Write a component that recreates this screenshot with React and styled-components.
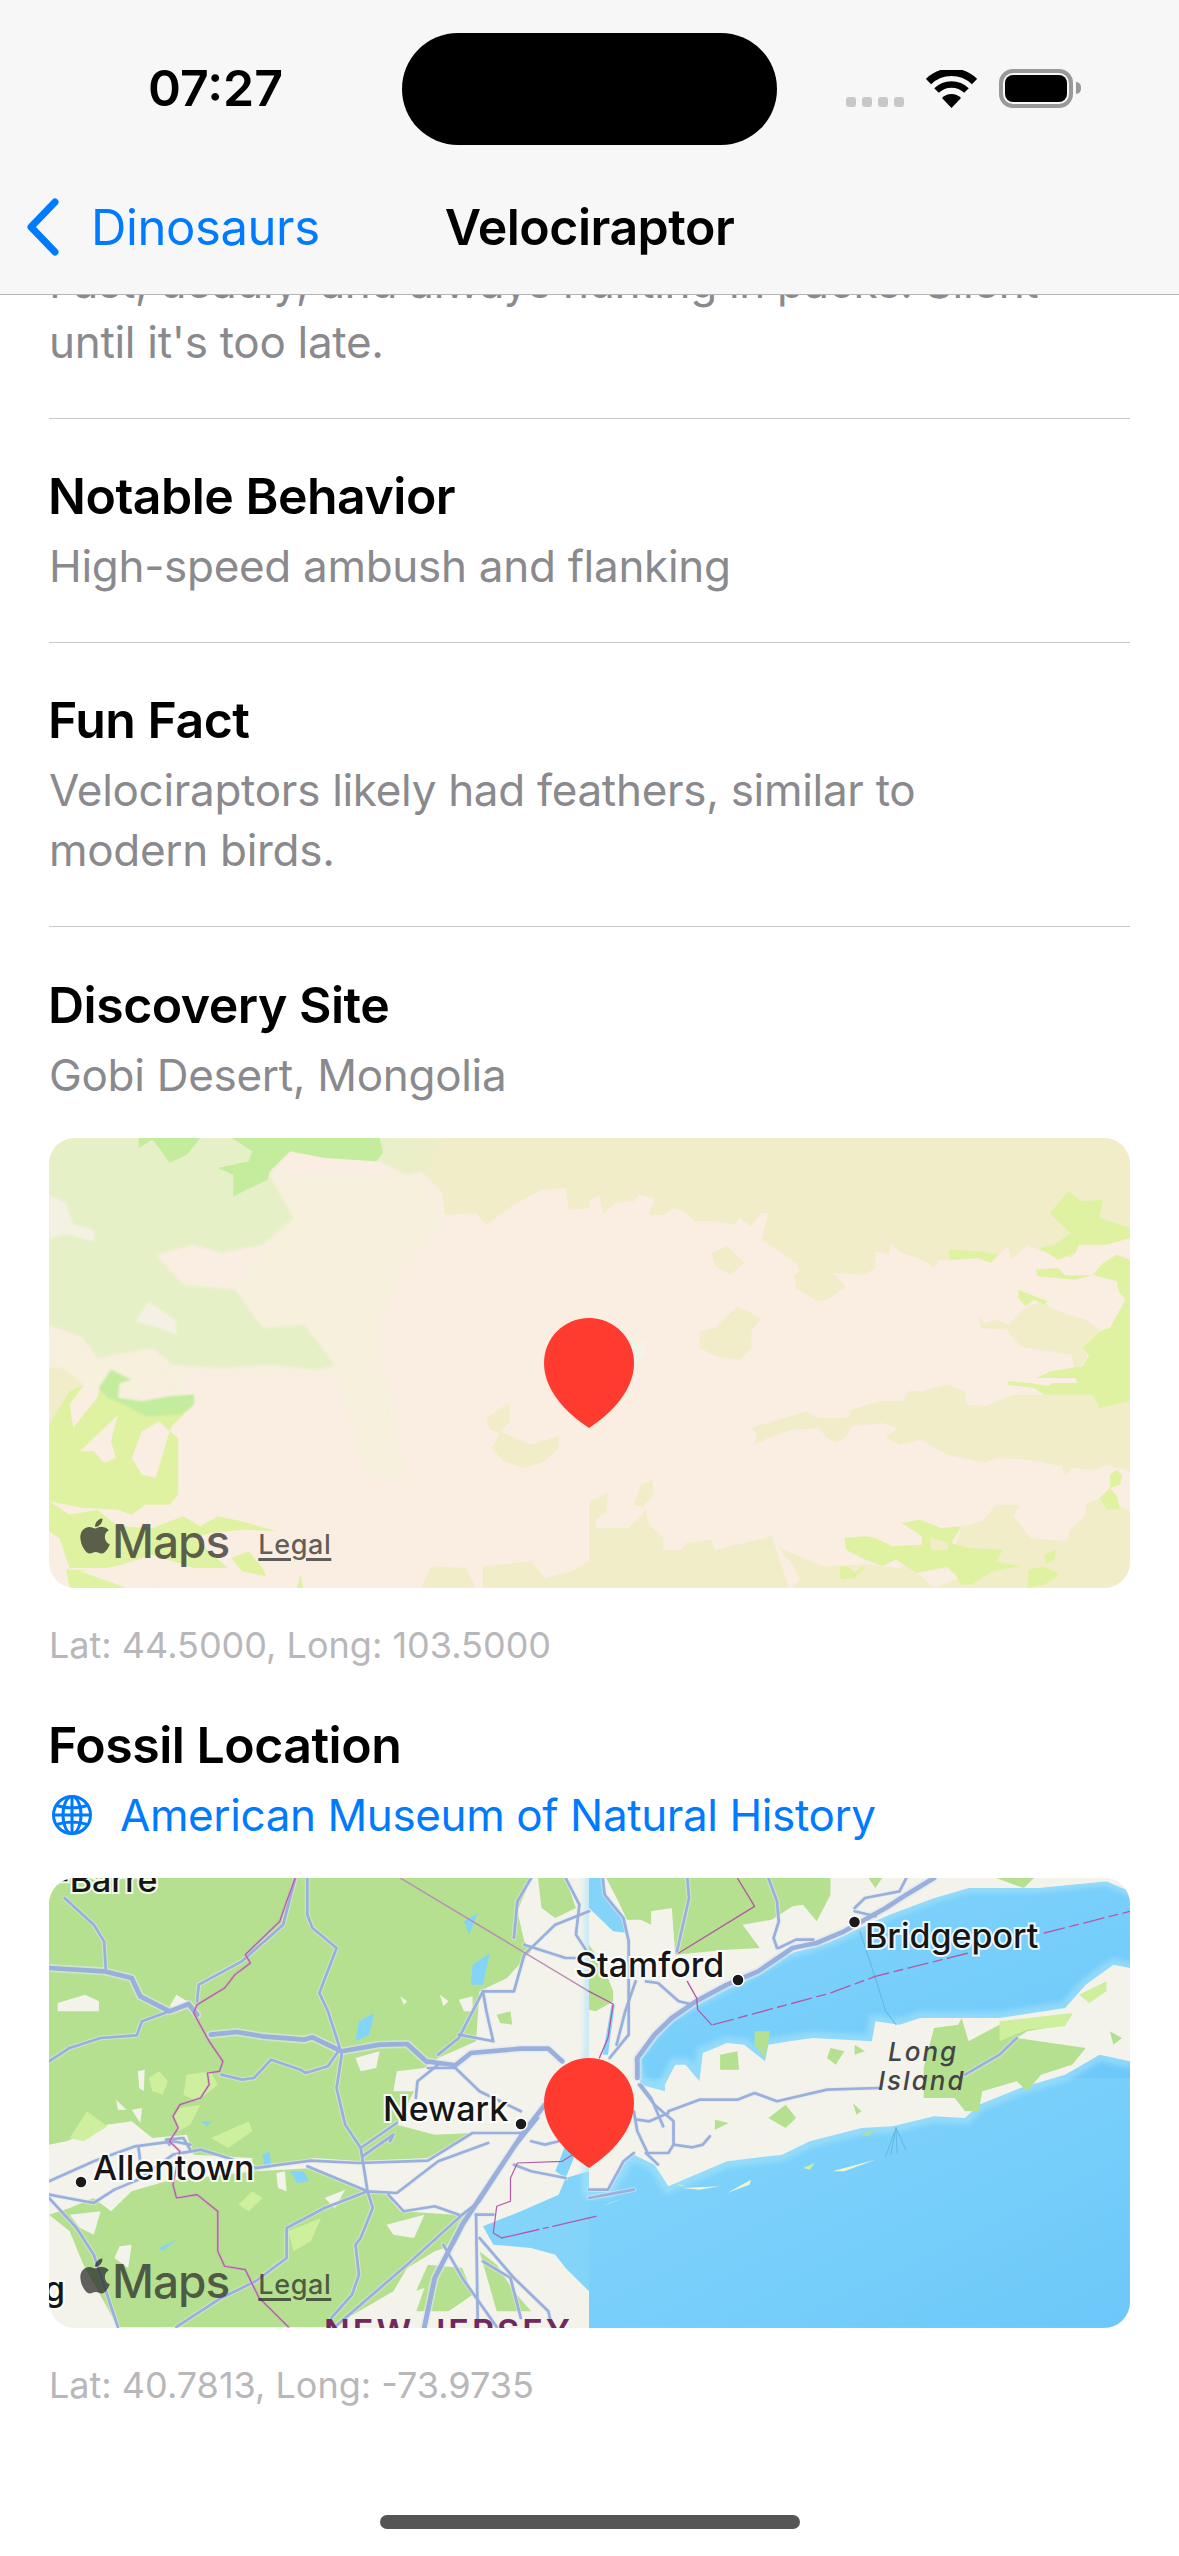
import React from 'react'
import styled, { createGlobalStyle } from 'styled-components'
import { FaApple } from 'react-icons/fa'

const GlobalStyle = createGlobalStyle`
	html, body {
		margin: 0;
		padding: 0;
		background: #fff;
	}
	body {
		font-family: Inter, "Noto Sans", sans-serif;
		-webkit-font-smoothing: antialiased;
	}
`

// map shapes are traced from 3x crops, so they sit in a stretched coordinate space
const ZOOM = 'scale(0.3444 0.3333)'
const ZOOM_RIGHT = 'translate(540 0) scale(0.3450 0.3333)'

const Shapes = ({ fill, items, ...rest }) => (
	<g fill={fill} {...rest}>
		{items.map((points, i) => <polygon key={i} points={points} />)}
	</g>
)

const Lines = ({ stroke, width, items, ...rest }) => (
	<g fill='none' stroke={stroke} strokeWidth={width} strokeLinejoin='round' strokeLinecap='round' {...rest}>
		{items.map((d, i) => <path key={i} d={d} />)}
	</g>
)

function GobiMap() {
	const tan = '#f1edc9'
	const yellow = '#dff2a2'
	const green = '#c3ec9d'
	return (
		<MapSvg viewBox='0 0 1081 450'>
			<defs>
				<linearGradient id='paleFade' x1='0' x2='1' y1='0' y2='0'>
					<stop offset='0' stopColor='#e6f0c6' />
					<stop offset='0.72' stopColor='#e6f0c6' />
					<stop offset='1' stopColor='#f1edc9' />
				</linearGradient>
				<filter id='soft' x='-10%' y='-10%' width='120%' height='120%'>
					<feGaussianBlur stdDeviation='2.5' />
				</filter>
				<filter id='softer' x='-20%' y='-20%' width='140%' height='140%'>
					<feGaussianBlur stdDeviation='14' />
				</filter>
			</defs>
			<rect width='1081' height='450' fill='#f9eee1' />
			<g transform={ZOOM}>
				<Shapes fill='#f6f0dd' filter='url(#softer)' items={[
					'640,110 1080,110 1140,240 1000,430 950,600 1000,860 1040,1030 920,1000 840,700 400,700 350,800 340,680 390,440 540,455 700,240',
					'0,560 140,660 300,640 340,720 240,800 140,740 0,860',
				]} />
				<polygon fill='url(#paleFade)' filter='url(#soft)' points='0,0 1250,0 1250,60 1140,160 1080,100 1040,110 960,70 700,40 640,110 710,240 620,320 500,345 420,320 310,350 390,440 540,455 620,570 740,560 830,680 780,695 640,680 500,690 360,680 300,630 140,660 100,600 0,560' />
				<Shapes fill={tan} items={[
					'1150,0 1568,0 1568,210 1510,215 1500,150 1430,155 1350,200 1270,260 1240,225 1150,230 1140,160 1090,100',
					'1270,840 1335,795 1340,850 1310,880 1400,920 1480,895 1480,930 1440,970 1380,990 1320,970 1285,930 1310,885 1280,875',
					'1080,1350 1110,1285 1210,1290 1240,1350',
					'1260,1350 1260,1285 1400,1270 1440,1320 1520,1300 1568,1270 1568,1350',
				]} />
				<Shapes fill={tan} filter='url(#soft)' items={['0,690 40,690 100,740 60,790 0,860']} />
				<Shapes fill='#f4f1e4' filter='url(#soft)' items={[
					'0,170 50,195 70,260 130,275 130,310 60,290 0,300',
					'250,550 290,490 370,550 370,590 320,570',
				]} />
				<Shapes fill={yellow} items={[
					'0,860 60,760 100,740 60,800 70,870 140,780 150,740 200,780 270,800 350,780 420,770 420,800 360,860 350,880 375,900 375,1070 350,1100 280,1100 240,1130 200,1115 100,1110 0,1090',
					'0,1090 60,1130 140,1115 200,1165 300,1170 390,1135 440,1165 490,1135 560,1150 660,1180 560,1175 470,1185 420,1200 520,1290 420,1290 300,1250 180,1290 60,1290 30,1200 0,1180',
					'530,1260 580,1240 620,1290 630,1315 560,1300',
					'50,1295 200,1300 222,1350 60,1350',
					'720,1350 730,1310 738,1350',
				]} />
				<Shapes fill='#f9eee1' items={[
					'90,940 200,830 180,910 195,960 160,975 130,940',
					'240,960 270,880 320,850 350,880 310,1020 270,1010',
					'90,1300 200,1285 290,1300 300,1350 225,1350',
				]} />
				<Shapes fill={green} filter='url(#soft)' items={[
					'145,750 180,695 240,725 205,735 200,780 270,790 350,775 420,770 420,800 380,830 280,835 220,800 170,780',
				]} />
				<Shapes fill={green} items={[
					'260,30 300,5 320,30 350,75 400,50 440,0 260,0',
					'530,0 960,0 970,45 950,70 800,60 700,40 640,100 635,125 535,175 535,110 490,90 580,70 590,40',
				]} />
			</g>
			<g transform={ZOOM_RIGHT}>
				<Shapes fill={tan} items={[
					'0,0 1568,0 1568,300 1500,320 1420,320 1400,360 1310,340 1270,320 1225,365 1215,325 1165,375 1130,360 1045,365 1015,365 1000,390 965,365 905,345 875,315 870,350 830,340 830,390 800,410 705,405 745,445 690,485 660,490 600,450 595,410 610,400 600,375 500,305 520,225 500,225 470,265 435,240 425,260 370,250 305,250 275,220 245,210 220,230 175,230 190,180 145,170 130,190 75,195 40,230 30,170 0,190',
					'355,345 400,325 450,375 410,410 365,385',
					'320,580 365,570 430,505 500,540 470,580 470,630 435,665 370,655 320,630',
					'1130,530 1135,570 1210,575 1250,625 1400,650 1405,690 1430,680 1450,640 1430,630 1480,575 1440,545 1360,520 1310,490 1265,510 1215,560 1185,545 1145,555',
					'470,870 630,820 660,840 750,840 760,815 840,790 910,790 925,760 960,760 1040,740 1090,760 1095,800 1150,805 1230,770 1300,770 1460,770 1480,810 1568,790 1568,1000 1500,980 1470,995 1400,990 1380,1015 1370,985 1280,965 1180,960 1150,975 1040,950 960,905 900,920 860,900 895,870 850,855 760,865 750,890 720,915 690,900 665,870 590,875 520,900 480,920 485,885',
					'0,1350 0,1090 55,1065 50,1120 20,1145 20,1170 115,1170 155,1130 165,1110 130,1100 150,1040 185,1025 185,1075 160,1100 175,1160 215,1200 215,1235 270,1235 280,1215 355,1205 365,1235 530,1195 580,1350',
					'550,1230 590,1280 610,1325 590,1350 1568,1350 1568,1120 1480,1080 1440,1100 1440,1130 1395,1175 1385,1210 1280,1200 1230,1135 1250,1100 1180,1100 1140,1150 1080,1165 1060,1230 900,1290 800,1280 680,1285',
				]} />
				<Shapes fill={yellow} items={[
					'1335,225 1390,160 1425,190 1490,185 1480,240 1568,270 1568,300 1500,320 1420,320 1410,345 1360,365 1305,330 1350,320 1395,285',
					'1045,335 1130,340 1185,350 1165,375 1130,360 1045,365',
					'1295,395 1360,390 1380,412 1460,412 1410,425 1300,415',
					'1568,365 1530,350 1490,375 1460,410 1530,430 1535,460 1555,485 1510,570 1480,580 1430,630 1450,650 1430,685 1340,700 1295,720 1410,720 1415,735 1345,735 1330,745 1280,735 1215,730 1215,740 1290,750 1320,770 1460,770 1480,810 1568,790',
					'1245,455 1330,490 1320,500 1290,485 1265,505 1245,480',
					'905,1155 960,1145 1020,1170 1080,1165 1050,1215 1100,1230 1200,1235 1180,1270 1250,1285 1170,1300 1110,1340 1080,1340 1040,1285 950,1305 890,1265 850,1285 790,1260 745,1235 740,1200 800,1195 830,1200 880,1225 965,1220 965,1195',
					'725,1285 750,1285 770,1305 790,1285 800,1290 770,1320 730,1325',
					'1275,1295 1320,1285 1365,1310 1320,1340 1270,1350',
					'1320,1250 1355,1235 1350,1265 1325,1280',
					'1480,1080 1510,1050 1510,1010 1530,995 1545,1010 1540,1040 1510,1050 1530,1075 1540,1115 1500,1115',
				]} />
				<Shapes fill={tan} items={['990,1200 1040,1215 1040,1235 990,1235']} />
				<Shapes fill='#f9eee1' items={['950,1305 1040,1290 1070,1320 1000,1350']} />
				<Shapes fill='#f3f3ea' items={['115,618 168,612 160,650 130,685']} />
			</g>
		</MapSvg>
	)
}

const MAJOR_LEFT = [
	'M0,270 L160,280 L240,300 L265,355 L350,400 L405,378 L430,410',
	'M470,470 L545,462 L620,475 L740,485 L765,478 L850,520 L960,500 L1040,498 L1095,550 L1180,562 L1225,525 L1370,512 L1450,512 L1490,550',
	'M1090,1347 L1120,1200 L1200,1040 L1380,760 L1440,680',
]

const MINOR_LEFT = [
	'M45,60 L130,140 L160,190 L165,275',
	'M0,550 L60,510 L150,480 L255,472 L270,430 L350,400',
	'M430,370 L435,320 L560,250 L680,140 L700,60 L715,0',
	'M750,0 L750,110 L765,150 L835,210 L785,345 L810,400 L835,480 L850,530 L835,630 L860,740 L905,810 L925,940 L940,990 L905,1080 L890,1100 L900,1190 L880,1250 L820,1320',
	'M500,590 L560,605 L595,600 L645,545 L730,575 L745,585 L810,565 L840,520',
	'M905,810 L1010,735',
	'M910,835 L1000,770 L990,790',
	'M600,870 L760,848 L900,855 L1100,848 L1230,765 L1370,765',
	'M410,800 L360,790 L250,805 L130,850 L0,910',
	'M0,950 L130,975 L190,935 L260,905 L360,830 L440,815 L520,840 L600,870',
	'M260,810 L265,850',
	'M410,815 L390,780 L340,785 L350,800',
	'M750,865 L925,940 L1010,945 L1130,850 L1275,795',
	'M0,960 L80,1050 L130,1130 L200,1347',
	'M925,940 L800,990 L690,1050 L690,1140 L600,1210 L500,1260 L370,1347',
	'M985,950 L1030,1000 L1120,985 L1190,1010',
	'M1130,560 L1070,610 L1065,660',
	'M1100,570 L1180,570 L1250,640 L1370,700',
	'M1190,470 L1290,490 L1270,400 L1260,340 L1350,340 L1380,230 L1470,140 L1568,100',
	'M1380,200 L1500,240 L1530,240',
	'M1350,180 L1360,70 L1400,0',
	'M1500,0 L1540,80 L1530,170 L1568,230',
	'M1130,530 L1190,480 L1260,340',
	'M830,1347 L1040,1160 L1200,1010 L1250,970 L1350,810 L1420,720',
	'M1240,1010 L1245,1347',
	'M1145,1100 L1200,1200 L1300,1347',
	'M1250,1080 L1350,1200 L1450,1300 L1460,1347',
	'M1260,1150 L1340,1200 L1370,1320',
	'M1350,860 L1400,880 L1500,900',
	'M1290,1010 L1240,1010',
	'M1400,790 L1440,800 L1480,790',
]

const MAJOR_RIGHT = [
	'M1000,0 L920,50 L860,90 L740,160 L660,195 L590,210 L490,280 L400,320 L310,370 L240,420 L190,470 L140,540 L140,600',
]

const MINOR_RIGHT = [
	'M40,0 L45,50 L100,120 L115,190 L115,470 L60,540',
	'M135,310 L105,400 L80,500',
	'M285,0 L290,60 L255,220',
	'M520,0 L545,70 L550,130 L535,180 L545,210',
	'M770,90 L800,60 L900,40 L920,0',
	'M770,100 L830,115',
	'M550,210 L600,185 L650,185',
	'M165,310 L200,315 L260,370 L300,380',
	'M230,700 L320,665 L430,665 L480,645 L545,670 L690,635 L840,630',
	'M1090,590 L1190,530 L1240,480',
	'M140,725 L175,730 L230,705',
	'M145,620 L190,680 L245,730 L245,800 L300,808 L330,800 L350,775',
	'M150,620 L180,660 L215,745',
	'M130,700 L140,760 L170,825 L230,825 L245,800',
	'M130,825 L100,850 L55,935 L0,935',
	'M165,825 L200,860',
	'M0,960 L130,935',
]

const LONG_ISLAND = '0,540 130,545 150,620 220,640 220,620 250,560 280,560 320,610 330,525 400,495 450,500 510,550 520,500 580,490 650,480 820,490 830,430 900,440 960,420 1100,420 1190,420 1380,390 1440,320 1520,260 1568,270 1568,550 1480,530 1380,590 1250,630 1130,680 1090,720 1000,715 880,745 790,750 640,790 560,830 400,850 230,925 190,860 120,825 55,940 0,940'
const CT_COAST = '0,0 1568,0 1568,40 1500,10 1300,30 1100,30 1000,60 870,110 700,190 570,230 450,300 320,370 230,420 130,545 0,560'

function NewYorkMap() {
	const green = '#b5e08f'
	const light = '#cdef9e'
	const land = '#f3f3ec'
	const purple = '#b25aa6'
	return (
		<MapSvg viewBox='0 0 1081 450'>
			<defs>
				<linearGradient id='sea' x1='0' x2='1' y1='0' y2='1'>
					<stop offset='0' stopColor='#84d6fb' />
					<stop offset='1' stopColor='#6cc8f9' />
				</linearGradient>
				<filter id='coast' x='-10%' y='-10%' width='120%' height='120%'>
					<feGaussianBlur stdDeviation='8' />
				</filter>
			</defs>
			<rect width='1081' height='450' fill={land} />
			<g transform={ZOOM}>
				<Shapes fill='#84d4fa' items={[
					'1260,1045 1370,1000 1480,950 1500,900 1568,880 1568,1240 1500,1170 1470,1130 1400,1110 1290,1100',
					'1470,880 1500,800 1520,720 1540,800 1500,900',
				]} />
				<Shapes fill={green} items={[
					'0,0 1400,0 1360,100 1380,190 1400,220 1330,300 1250,340 1240,490 1130,540 1090,570 1010,580 1000,640 1060,640 1010,740 1120,770 1230,765 1100,840 900,850 770,840 640,870 590,880 590,840 420,830 400,770 300,780 240,730 170,740 50,790 0,800',
					'0,1010 60,990 130,960 180,1000 240,940 340,910 600,880 770,870 920,940 980,950 1020,1000 1180,1010 1230,1000 1200,1060 1180,1100 1120,1120 1040,1170 1000,1240 900,1300 820,1347 200,1347 180,1310 100,1160 60,1060',
					'1250,1120 1300,1160 1350,1240 1400,1300 1300,1300',
					'1100,1160 1200,1170 1230,1250 1160,1300 1040,1300',
					'1420,0 1500,0 1530,90 1470,120 1430,90',
					'1300,410 1340,400 1345,440 1310,435',
				]} />
				<Shapes fill={light} items={[
					'290,600 320,580 345,610 330,650 300,640',
					'400,590 470,580 490,620 430,670 390,650',
					'380,690 440,680 410,740 375,760 360,720',
					'60,780 110,700 170,745 100,790',
					'470,780 580,730 590,760 520,810',
					'695,1060 790,1020 760,1090 710,1120',
					'590,940 620,960 580,1000 550,980',
				]} />
				<Shapes fill={land} items={[
					'25,375 105,350 145,370 145,400 25,400',
					'1020,355 1040,370 1030,380',
					'1135,350 1160,370 1145,385',
					'1190,365 1230,355 1230,400 1205,400',
					'350,385 370,350 410,375 380,400',
					'890,540 960,520 950,570 905,580',
					'258,580 278,575 275,640 262,630',
					'195,665 225,695 200,695',
					'240,695 270,690 265,735',
					'170,740 215,735 210,770',
					'660,885 685,880 690,940 665,930',
					'60,1010 150,1000 130,1070 90,1050',
					'205,1105 240,1100 230,1170 190,1140',
					'800,960 860,935 830,990',
					'980,1040 1090,1010 1060,1080 1000,1070',
					'1000,1260 1090,1230 1060,1320 1000,1320',
				]} />
				<Shapes fill='#84d4fa' items={[
					'900,430 945,405 930,470 890,490',
					'1230,260 1280,225 1260,320 1225,320',
					'1205,130 1245,105 1220,170',
					'620,830 640,820 645,860 625,860',
					'700,880 740,880 755,910 720,915',
					'440,730 470,730 460,745',
					'320,1110 370,1085 330,1120',
				]} />
			</g>
			<g transform={ZOOM_RIGHT}>
				<rect x='0' y='540' width='1568' height='810' fill='url(#sea)' />
				<polygon fill='url(#sea)' points='0,560 130,545 230,420 320,370 450,300 570,230 700,190 870,110 1000,60 1100,30 1300,30 1500,10 1568,40 1568,600 0,600' />
				<g filter='url(#coast)' opacity='0.55'>
					<polygon points={LONG_ISLAND} fill='none' stroke='#a9e4fb' strokeWidth='40' />
					<polygon points={CT_COAST} fill='none' stroke='#a9e4fb' strokeWidth='30' />
				</g>
				<Shapes fill={land} items={[LONG_ISLAND, CT_COAST]} />
				<Shapes fill='#84d4fa' items={[
					'0,0 40,0 50,50 100,120 110,165 70,160 40,130 0,90',
					'75,380 55,530 40,530 65,380',
				]} />
				<Shapes fill={green} items={[
					'100,0 700,0 700,50 660,130 620,80 590,85 530,125 445,140 495,210 400,215 250,230 240,90 180,100 180,140 150,125 110,125 85,70 50,0',
					'0,200 40,260 70,340 70,370 20,400 0,395',
					'970,570 1000,450 1070,440 1080,420 1100,490 1190,440 1400,410 1380,440 1270,460 1240,480 1440,510 1400,560 1310,590 1270,640 1240,610 1140,640 1130,700 1090,700 1060,660 970,660',
					'380,530 430,520 435,575 380,575',
					'480,460 525,460 510,540 480,500',
					'700,510 740,520 715,560 690,540',
					'770,500 800,520 770,530',
					'520,720 570,680 600,720 570,750',
					'365,725 405,735 365,755',
					'765,675 790,700 775,710',
					'790,770 825,755 810,775',
					'1510,460 1545,480 1520,500',
					'810,0 850,0 830,30',
					'1180,0 1290,0 1260,30',
				]} />
				<Shapes fill={light} items={[
					'1190,430 1400,405 1380,445 1270,455 1190,490',
					'1420,350 1500,310 1500,340 1450,375',
					'620,870 655,855 640,875',
					'250,915 280,925 265,925',
				]} />
				<Shapes fill='#f1f5cf' items={[
					'270,930 380,925 320,935',
					'400,945 470,905 465,920',
					'705,880 830,845 740,880',
					'40,985 100,960 60,975',
				]} />
			</g>
			<g transform={ZOOM}>
				<Lines stroke='#e3e8ef' width={14} opacity={0.6} items={MINOR_LEFT} />
				<Lines stroke='#e3e8ef' width={24} opacity={0.6} items={MAJOR_LEFT} />
				<Lines stroke='#99afdc' width={8} items={MINOR_LEFT} />
				<Lines stroke='#99afdc' width={14} items={MAJOR_LEFT} />
				<Lines stroke='#d79ad0' width={8} opacity={0.5} items={['M715,0 L690,70 L670,130 L570,230 L585,255 L540,290 L510,330 L430,380 L420,405 L465,490 L505,550 L495,580 L460,585 L465,620 L440,660 L380,680 L360,715 L375,750 L350,790 L380,820 L360,920 L370,960 L430,950 L490,1000 L490,1120 L510,1165 L570,1175 L610,1260 L695,1347']} />
				<Lines stroke={purple} width={3.5} items={[
					'M715,0 L690,70 L670,130 L570,230 L585,255 L540,290 L510,330 L430,380 L420,405 L465,490 L505,550 L495,580 L460,585 L465,620 L440,660 L380,680 L360,715 L375,750 L350,790 L380,820 L360,920 L370,960 L430,950 L490,1000 L490,1120 L510,1165 L570,1175 L610,1260 L695,1347',
					'M1568,800 L1490,850 L1360,855 L1340,900 L1340,970 L1300,985 L1290,1065 L1315,1080',
				]} />
				<Lines stroke='#b98bb5' width={4} items={['M1020,0 L1568,340']} />
				<Lines stroke={purple} width={4} strokeDasharray='110 14 14 14' items={['M1315,1080 L1568,1020']} />
			</g>
			<g transform={ZOOM_RIGHT}>
				<Lines stroke='#e3e8ef' width={14} opacity={0.6} items={MINOR_RIGHT} />
				<Lines stroke='#e3e8ef' width={26} opacity={0.6} items={MAJOR_RIGHT} />
				<Lines stroke='#99afdc' width={8} items={MINOR_RIGHT} />
				<Lines stroke='#99afdc' width={14} items={MAJOR_RIGHT} />
				<Lines stroke='#5fb2de' width={3} opacity={0.8} items={[
					'M785,160 L830,300 L860,400 L890,440',
					'M890,750 L860,835',
					'M890,750 L875,830',
					'M890,750 L893,825',
					'M890,750 L918,815',
				]} />
				<Lines stroke={purple} width={4} items={[
					'M430,0 L480,85 L260,225',
					'M0,340 L70,378 L55,480 L30,540',
					'M285,310 L312,360 L315,395 L355,440',
				]} />
				<Lines stroke={purple} width={4} strokeDasharray='60 16 26 16' items={[
					'M360,440 L700,345 L830,295 L1100,225',
					'M1320,165 L1568,100',
					'M0,1020 L20,1015',
				]} />
			</g>

			<CityLabel x='816' y='70'>Bridgeport</CityLabel>
			<CityLabel x='526' y='99'>Stamford</CityLabel>
			<CityLabel x='334' y='243'>Newark</CityLabel>
			<CityLabel x='44' y='302'>Allentown</CityLabel>
			<CityLabel x='5' y='14'>-Barre</CityLabel>
			<CityLabel x='16' y='423' textAnchor='end'>g</CityLabel>
			<circle cx='805.5' cy='44' r='6' fill='#1a1a1a' stroke='#fff' strokeWidth='1.5' />
			<circle cx='689' cy='102' r='6' fill='#1a1a1a' stroke='#fff' strokeWidth='1.5' />
			<circle cx='472' cy='246' r='6' fill='#1a1a1a' stroke='#fff' strokeWidth='1.5' />
			<circle cx='32' cy='304' r='6' fill='#1a1a1a' stroke='#fff' strokeWidth='1.5' />
			<IslandLabel x='839' y='183'>Long</IslandLabel>
			<IslandLabel x='829' y='212'>Island</IslandLabel>
			<StateLabel x='275' y='466'>NEW JERSEY</StateLabel>
		</MapSvg>
	)
}

function MapCard({ children }) {
	return (
		<MapFrame>
			{children}
			<MapsMark>
				<AppleLogo />
				<MapsWord>Maps</MapsWord>
				<LegalLink>Legal</LegalLink>
			</MapsMark>
			<Pin viewBox='0 0 90 110'>
				<path d='M45 0C70 0 90 20 90 45C90 72 68 95 45 110C22 95 0 72 0 45C0 20 20 0 45 0Z' fill='#ff3b30' />
			</Pin>
		</MapFrame>
	)
}

function App() {
	return (
		<Screen>
			<GlobalStyle />
			<Content>
				<Row>
					<Value>Fast, deadly, and always hunting in packs. Silent<br />until it's too late.</Value>
				</Row>
				<Row>
					<Title>Notable Behavior</Title>
					<Value>High-speed ambush and flanking</Value>
				</Row>
				<Row>
					<Title>Fun Fact</Title>
					<Value>Velociraptors likely had feathers, similar to<br />modern birds.</Value>
				</Row>
				<Section>
					<Title>Discovery Site</Title>
					<Value>Gobi Desert, Mongolia</Value>
					<MapCard><GobiMap /></MapCard>
					<Coords>Lat: 44.5000, Long: 103.5000</Coords>
				</Section>
				<Section $compact>
					<Title>Fossil Location</Title>
					<LinkRow>
						<GlobeIcon viewBox='0 0 42 42'>
							<circle cx='21' cy='21' r='18.5' />
							<ellipse cx='21' cy='21' rx='9' ry='18.5' />
							<path d='M21 2.5V39.5M2.5 21H39.5M5.5 11.5C15 14.5 27 14.5 36.5 11.5M5.5 30.5C15 27.5 27 27.5 36.5 30.5' />
						</GlobeIcon>
						<LinkText>American Museum of Natural History</LinkText>
					</LinkRow>
					<MapCard><NewYorkMap /></MapCard>
					<Coords>Lat: 40.7813, Long: -73.9735</Coords>
				</Section>
			</Content>

			<NavHeader>
				<StatusBar>
					<Clock>07:27</Clock>
					<StatusIcons>
						<SignalDots>
							<Dot /><Dot /><Dot /><Dot />
						</SignalDots>
						<svg width='51' height='38' viewBox='0 0 51 38'>
							<path d='M25.5 38L16 28A13.5 13.5 0 0 1 35 28Z' fill='#000' />
							<path d='M10.5 20.5A21.5 21.5 0 0 1 40.5 20.5' fill='none' stroke='#000' strokeWidth='6.5' />
							<path d='M2.5 11.5A33 33 0 0 1 48.5 11.5' fill='none' stroke='#000' strokeWidth='7.5' />
						</svg>
						<Battery>
							<BatteryFill />
						</Battery>
					</StatusIcons>
					<Island />
				</StatusBar>
				<NavBar>
					<BackButton>
						<svg width='36' height='60' viewBox='0 0 36 60'>
							<path d='M30 5L6 30L30 55' fill='none' stroke='#007aff' strokeWidth='7' strokeLinecap='round' strokeLinejoin='round' />
						</svg>
						<BackLabel>Dinosaurs</BackLabel>
					</BackButton>
					<NavTitle>Velociraptor</NavTitle>
				</NavBar>
			</NavHeader>

			<HomeIndicator />
		</Screen>
	)
}

const Screen = styled.div`
	position: relative;
	width: 1179px;
	height: 2556px;
	overflow: hidden;
	background: #fff;
`
const Content = styled.main`
	padding: 252px 49px 0;
`
const Row = styled.section`
	padding: 47px 0 46px;
	border-bottom: 1px solid #c9c9cb;
	&:first-child {
		padding-top: 0;
	}
`
const Section = styled.section`
	padding-top: ${(p) => (p.$compact ? '46px' : '48px')};
`
const Title = styled.h2`
	margin: 0 0 9px -1px;
	font-size: 50px;
	line-height: 61px;
	font-weight: 600;
	letter-spacing: -0.5px;
	color: #000;
`
const Value = styled.p`
	margin: 0;
	font-size: 44px;
	line-height: 60px;
	font-weight: 400;
	letter-spacing: -0.3px;
	color: #8a8a8e;
`
const Coords = styled.p`
	margin: 34px 0 0;
	font-size: 36px;
	line-height: 47px;
	color: #b8b8ba;
`
const LinkRow = styled.div`
	display: flex;
	align-items: center;
	gap: 27px;
	height: 60px;
	padding-left: 2px;
`
const GlobeIcon = styled.svg`
	width: 42px;
	height: 42px;
	fill: none;
	stroke: #007aff;
	stroke-width: 3;
`
const LinkText = styled.span`
	font-size: 44px;
	letter-spacing: -0.4px;
	color: #007aff;
`
const MapFrame = styled.div`
	position: relative;
	height: 450px;
	margin-top: 33px;
	border-radius: 26px;
	overflow: hidden;
`
const MapSvg = styled.svg`
	display: block;
	width: 1081px;
	height: 450px;
`
const CityLabel = styled.text`
	font-family: Inter, sans-serif;
	font-size: 34px;
	font-weight: 500;
	fill: #161616;
	stroke: #fff;
	stroke-width: 4px;
	stroke-opacity: 0.85;
	paint-order: stroke;
`
const IslandLabel = styled.text`
	font-family: Inter, sans-serif;
	font-size: 26px;
	font-style: italic;
	font-weight: 500;
	letter-spacing: 2px;
	fill: #444;
`
const StateLabel = styled.text`
	font-family: Inter, sans-serif;
	font-size: 34px;
	font-weight: 600;
	letter-spacing: 3px;
	fill: #70285e;
`
const MapsMark = styled.div`
	position: absolute;
	left: 31px;
	top: 378px;
	display: flex;
	align-items: baseline;
	color: rgba(38, 38, 38, 0.72);
`
const AppleLogo = styled(FaApple)`
	width: 34px;
	height: 40px;
	margin-left: -2px;
	flex: none;
	align-self: flex-start;
`
const MapsWord = styled.span`
	font-size: 46px;
	line-height: 50px;
	font-weight: 500;
	letter-spacing: -1px;
`
const LegalLink = styled.span`
	position: relative;
	top: -4px;
	margin-left: 29px;
	font-size: 27px;
	font-weight: 500;
	letter-spacing: 0.6px;
	text-decoration: underline;
	text-decoration-thickness: 3px;
	text-underline-offset: 4px;
`
const Pin = styled.svg`
	position: absolute;
	left: 495px;
	top: 180px;
	width: 90px;
	height: 110px;
`
const NavHeader = styled.header`
	position: absolute;
	top: 0;
	left: 0;
	right: 0;
	height: 294px;
	background: #f7f7f7;
	border-bottom: 1px solid #b4b4b4;
`
const StatusBar = styled.div`
	position: relative;
	display: flex;
	justify-content: space-between;
	align-items: center;
	height: 176px;
	padding: 0 106px 0 148px;
`
const Clock = styled.span`
	font-size: 50px;
	font-weight: 600;
	color: #000;
`
const Island = styled.div`
	position: absolute;
	left: 402px;
	top: 33px;
	width: 375px;
	height: 112px;
	border-radius: 56px;
	background: #000;
`
const StatusIcons = styled.div`
	display: flex;
	align-items: flex-end;
	gap: 22px;
`
const SignalDots = styled.div`
	display: flex;
	gap: 6px;
	padding-bottom: 1px;
`
const Dot = styled.i`
	display: block;
	width: 10px;
	height: 10px;
	border-radius: 3px;
	background: #c8c8c8;
`
const Battery = styled.div`
	position: relative;
	box-sizing: border-box;
	width: 74px;
	height: 39px;
	padding: 2px;
	border: 4px solid #999;
	border-radius: 14px;
	&::after {
		content: '';
		position: absolute;
		right: -12px;
		top: 9px;
		width: 5px;
		height: 12px;
		border-radius: 0 6px 6px 0;
		background: #999;
	}
`
const BatteryFill = styled.div`
	height: 100%;
	border-radius: 8px;
	background: #000;
`
const NavBar = styled.nav`
	display: grid;
	grid-template-columns: 1fr auto 1fr;
	align-items: center;
	height: 102px;
	padding-left: 25px;
`
const BackButton = styled.div`
	display: flex;
	align-items: center;
	gap: 30px;
`
const BackLabel = styled.span`
	font-size: 49px;
	letter-spacing: -0.4px;
	color: #007aff;
`
const NavTitle = styled.h1`
	margin: 0 0 0 -25px;
	font-size: 50px;
	font-weight: 600;
	letter-spacing: -0.5px;
	color: #000;
`
const HomeIndicator = styled.div`
	position: absolute;
	left: 380px;
	bottom: 27px;
	width: 420px;
	height: 14px;
	border-radius: 7px;
	background: #555;
`

export default App
